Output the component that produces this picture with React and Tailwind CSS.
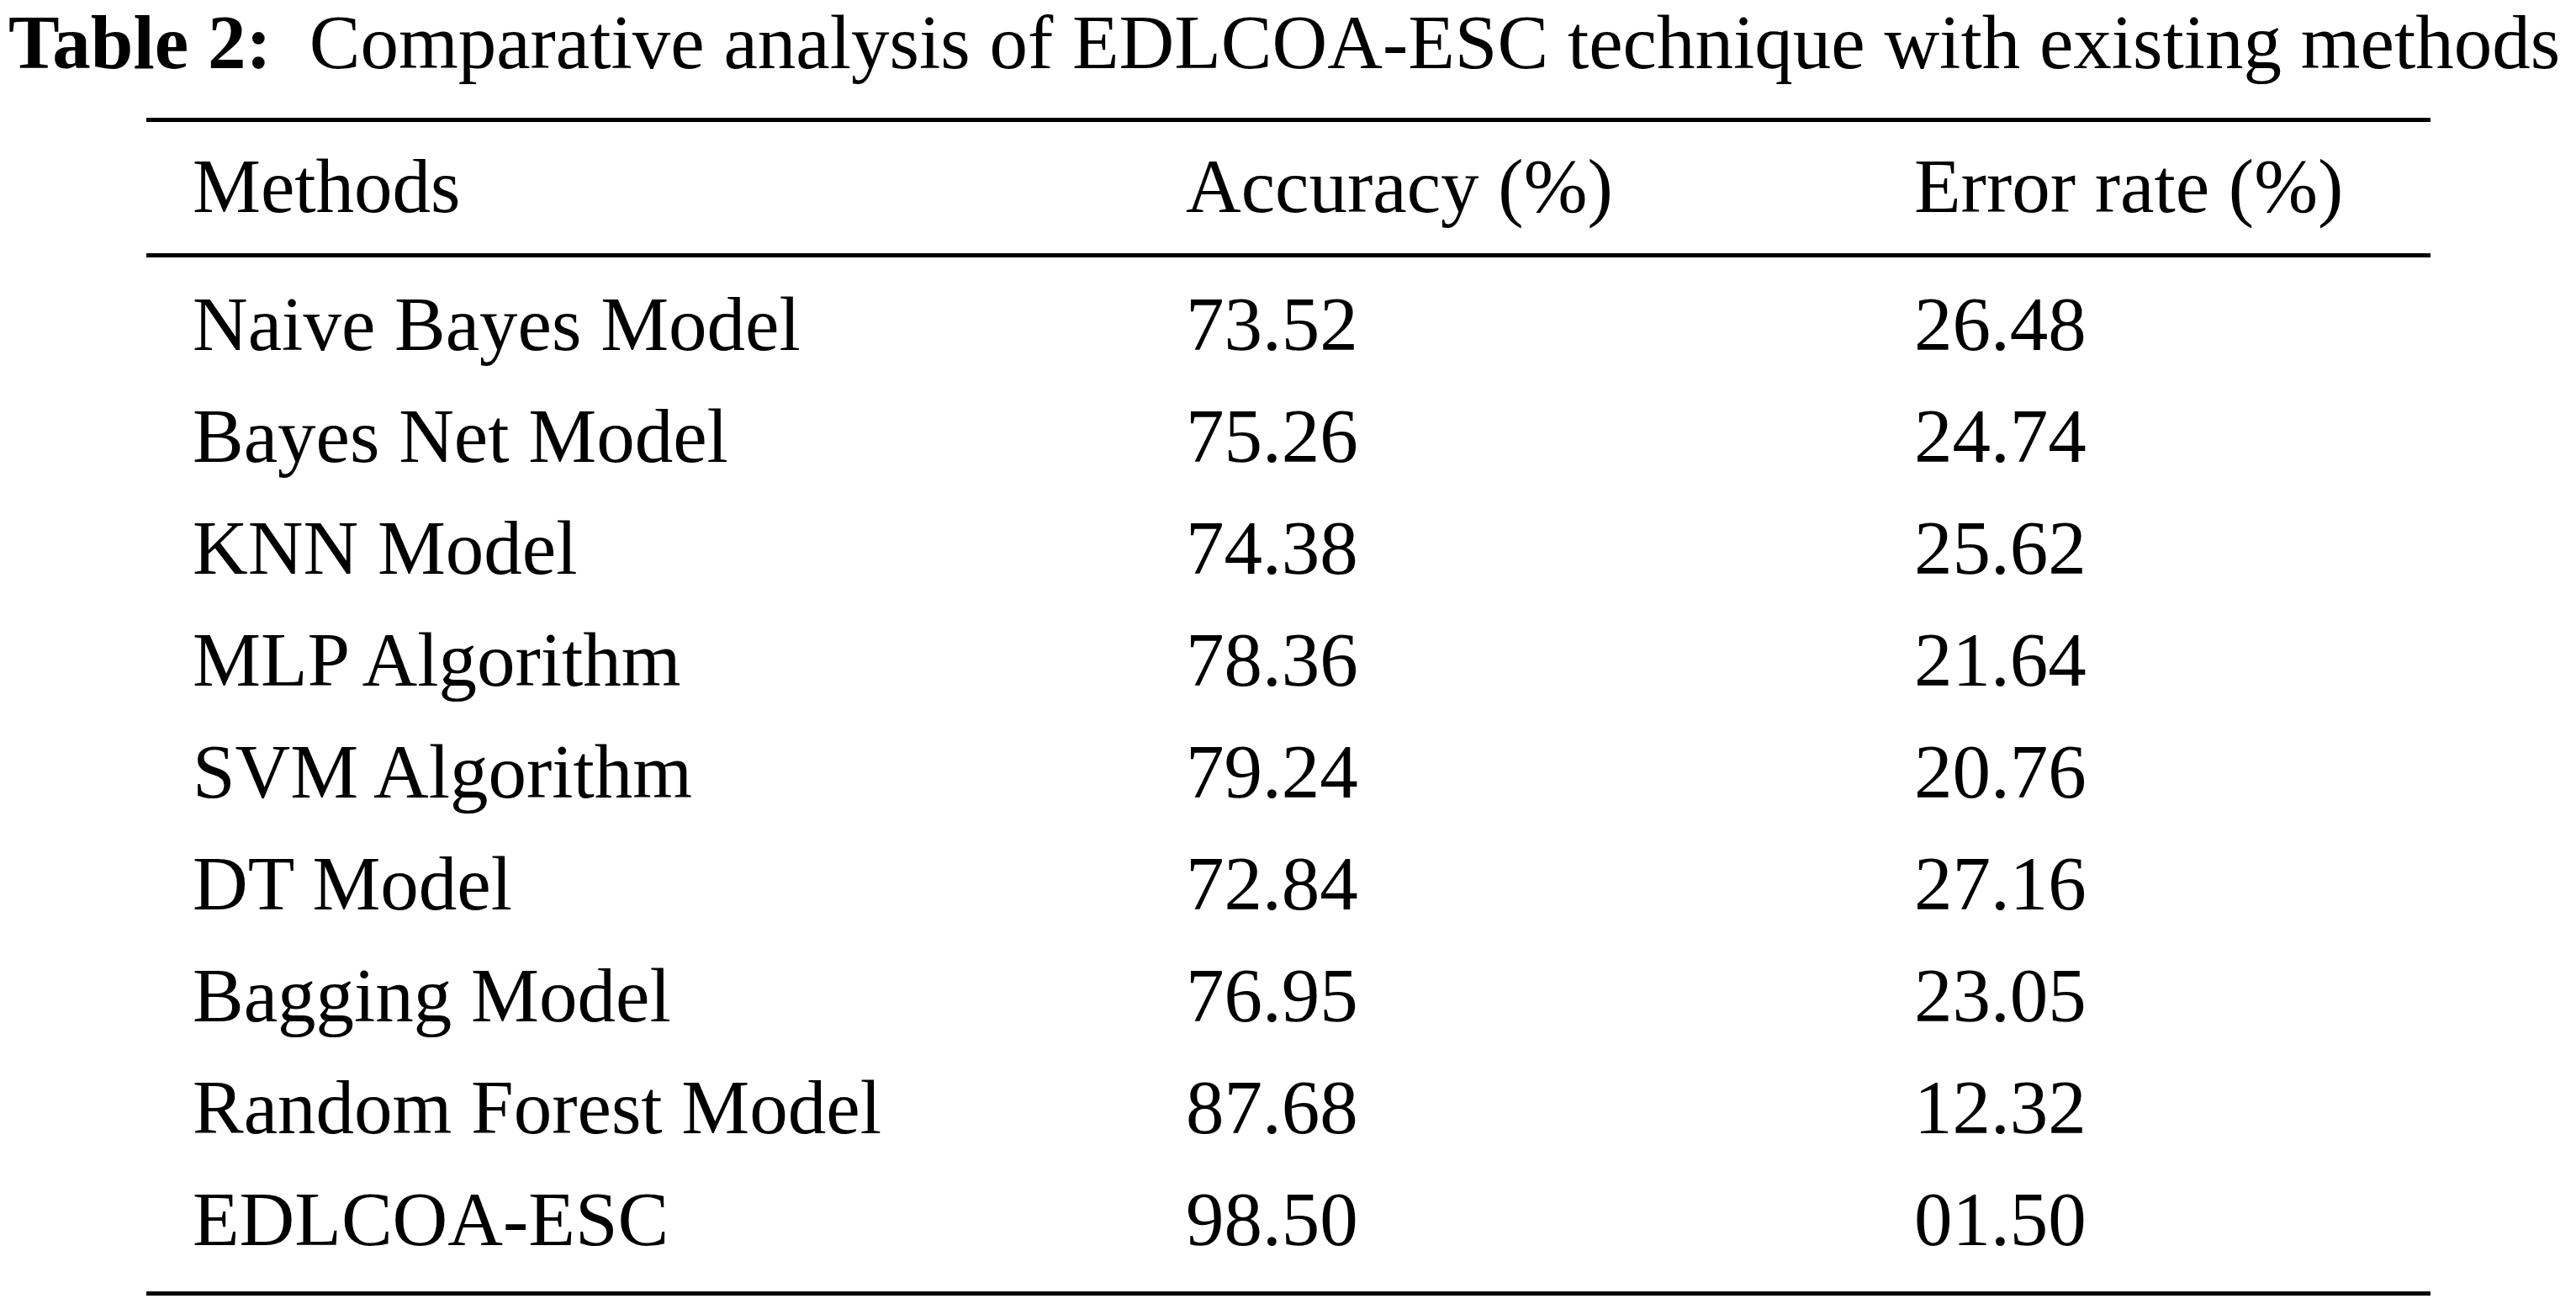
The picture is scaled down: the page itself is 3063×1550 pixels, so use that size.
import React from "react";

const rows = [
  ["Naive Bayes Model", "73.52", "26.48"],
  ["Bayes Net Model", "75.26", "24.74"],
  ["KNN Model", "74.38", "25.62"],
  ["MLP Algorithm", "78.36", "21.64"],
  ["SVM Algorithm", "79.24", "20.76"],
  ["DT Model", "72.84", "27.16"],
  ["Bagging Model", "76.95", "23.05"],
  ["Random Forest Model", "87.68", "12.32"],
  ["EDLCOA-ESC", "98.50", "01.50"],
];

export default function App() {
  return (
    <div className="min-h-screen w-full bg-white text-black font-['Liberation_Serif','Times_New_Roman',serif]">
      <div className="pl-[10px] text-[91px] leading-[101px] whitespace-nowrap">
        <span className="font-bold">Table 2:</span>
        <span className="ml-[45px]">Comparative analysis of EDLCOA-ESC technique with existing methods</span>
      </div>
      <div className="ml-[174px] mt-[39px] w-[2716px] border-t-[5px] border-b-[5px] border-black text-[91px] leading-[133px] whitespace-nowrap">
        <div className="grid grid-cols-[1181px_866px_1fr] pl-[55px] pt-[10px] pb-[13px] border-b-[5px] border-black">
          <div>Methods</div>
          <div>Accuracy (%)</div>
          <div>Error rate (%)</div>
        </div>
        <div className="pt-[13px] pb-[19px]">
          {rows.map((r) => (
            <div key={r[0]} className="grid grid-cols-[1181px_866px_1fr] pl-[55px] h-[133px]">
              <div>{r[0]}</div>
              <div>{r[1]}</div>
              <div>{r[2]}</div>
            </div>
          ))}
        </div>
      </div>
    </div>
  );
}
